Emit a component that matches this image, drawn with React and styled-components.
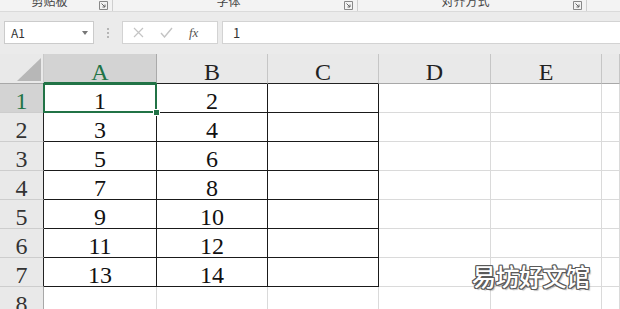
import React from "react";
import styled, { createGlobalStyle } from "styled-components";

const Global = createGlobalStyle`
  html, body { margin: 0; padding: 0; background: #fff; }
  body { overflow: hidden; }
`;

const Page = styled.div`
  width: 620px;
  height: 309px;
  overflow: hidden;
  position: relative;
  background: #fff;
  font-family: "Noto Sans CJK SC", "Noto Sans", sans-serif;
`;

const Ribbon = styled.div`
  display: flex;
  height: 11px;
  background: #f3f3f3;
  border-bottom: 1px solid #dadada;
  overflow: hidden;
`;

const RibbonGroup = styled.div`
  width: ${(p) => p.$w}px;
  flex: ${(p) => (p.$w ? "none" : "1")};
  display: flex;
  align-items: flex-end;
  height: 100%;
  border-right: ${(p) => (p.$w ? "1px solid #cfcfcf" : "none")};
  box-sizing: border-box;
  padding-right: 4px;
`;

const RibbonLabel = styled.span`
  flex: 1;
  text-align: center;
  font-size: 12px;
  line-height: 12px;
  margin-bottom: 4px;
  color: #444;
  white-space: nowrap;
`;

const Launcher = styled.svg`
  width: 9px;
  height: 9px;
  margin-bottom: 1px;
  flex: none;
`;

const FormulaBar = styled.div`
  display: flex;
  align-items: center;
  height: 42px;
  box-sizing: border-box;
  padding: 9px 0 10px 4px;
  background: #ebebeb;
`;

const NameBox = styled.div`
  width: 90px;
  height: 23px;
  box-sizing: border-box;
  background: #fff;
  border: 1px solid #cbcbcb;
  display: flex;
  align-items: center;
  justify-content: space-between;
  padding: 0 5px 0 6px;
  font-family: "Noto Sans CJK SC", "Noto Sans", sans-serif;
  font-size: 12px;
  color: #333;
`;

const Caret = styled.span`
  width: 0;
  height: 0;
  border-left: 3.5px solid transparent;
  border-right: 3.5px solid transparent;
  border-top: 4px solid #777;
`;

const Dots = styled.div`
  width: 28px;
  display: flex;
  flex-direction: column;
  align-items: center;
  gap: 2px;
  & > i {
    width: 2px;
    height: 2px;
    background: #b5b5b5;
    display: block;
  }
`;

const FuncBox = styled.div`
  width: 96px;
  height: 23px;
  box-sizing: border-box;
  background: #fff;
  border: 1px solid #d3d3d3;
  display: flex;
  align-items: center;
  padding-left: 10px;
  gap: 16px;
`;

const Fx = styled.span`
  font-family: "Liberation Serif", serif;
  font-style: italic;
  font-size: 13px;
  color: #555;
  margin-left: 0px;
`;

const FormulaInput = styled.div`
  flex: 1;
  margin-left: 4px;
  height: 23px;
  box-sizing: border-box;
  background: #fff;
  border: 1px solid #d3d3d3;
  border-right: none;
  display: flex;
  align-items: center;
  padding-left: 10px;
  font-size: 13px;
  color: #333;
`;

const Sheet = styled.div`
  display: grid;
  grid-template-columns: 44px 113px 111px 111px 112px 111px 1fr;
  grid-template-rows: 30px;
  grid-auto-rows: 29px;
  font-family: "Liberation Serif", "Noto Serif CJK SC", serif;
`;

const Corner = styled.div`
  background: #e9e9e9;
  border-right: 1px solid #c9c9c9;
  border-bottom: 1px solid #a8a8a8;
  box-sizing: border-box;
  position: relative;
  & > svg { display: block; }
`;

const ColHead = styled.div`
  box-sizing: border-box;
  background: ${(p) => (p.$sel ? "#d3d3d3" : "#e9e9e9")};
  color: ${(p) => (p.$sel ? "#217346" : "#222")};
  border-right: 1px solid ${(p) => (p.$sel ? "#aaaaaa" : "#c6c6c6")};
  border-bottom: ${(p) =>
    p.$sel ? "2px solid #217346" : p.$table ? "1px solid #222" : "1px solid #a8a8a8"};
  text-align: center;
  font-size: 24px;
  line-height: 22px;
  padding-top: 7px;
`;

const RowHead = styled.div`
  box-sizing: border-box;
  background: ${(p) => (p.$sel ? "#d3d3d3" : "#e9e9e9")};
  color: ${(p) => (p.$sel ? "#217346" : "#333")};
  border-right: 1px solid ${(p) => (p.$table ? "#222" : "#a8a8a8")};
  border-bottom: 1px solid #cdcdcd;
  text-align: center;
  font-size: 24px;
  line-height: 22px;
  padding-top: 6px;
`;

const Cell = styled.div`
  box-sizing: border-box;
  position: relative;
  border-right: 1px solid ${(p) => (p.$table ? "#1a1a1a" : "#dadada")};
  border-bottom: 1px solid ${(p) => (p.$table ? "#1a1a1a" : "#dadada")};
  text-align: center;
  font-size: 24px;
  line-height: 22px;
  padding-top: 6px;
  color: #111;
  ${(p) =>
    p.$active &&
    `
    &::after {
      content: "";
      position: absolute;
      left: -1px; top: -1px; right: -1px; bottom: -1px;
      border: 2px solid #217346;
      pointer-events: none;
    }
    &::before {
      content: "";
      position: absolute;
      right: -4px; bottom: -4px;
      width: 5px; height: 5px;
      background: #217346;
      border: 1px solid #fff;
      z-index: 2;
    }
  `}
`;

const Watermark = styled.div`
  position: absolute;
  left: 472px;
  top: 258px;
  font-family: "Noto Sans CJK SC", sans-serif;
  font-weight: 500;
  font-size: 24px;
  letter-spacing: -0.5px;
  color: #fff;
  text-shadow:
    1px 0 0 #5a5a5a, -1px 0 0 #5a5a5a, 0 1px 0 #5a5a5a, 0 -1px 0 #5a5a5a,
    1px 1px 0 #5a5a5a, -1px -1px 0 #5a5a5a, 1px -1px 0 #5a5a5a, -1px 1px 0 #5a5a5a,
    2px 2px 1px rgba(0,0,0,0.25);
`;

const LaunchIcon = () => (
  <Launcher viewBox="0 0 9 9">
    <path d="M0.5 0.5 H8.5 V8.5 H0.5 Z" fill="none" stroke="#888" strokeWidth="1" />
    <path d="M2.5 2.5 L6 6 M6 3.5 V6 H3.5" fill="none" stroke="#666" strokeWidth="1" />
  </Launcher>
);

const cols = ["A", "B", "C", "D", "E", ""];
const data = [
  [1, 2],
  [3, 4],
  [5, 6],
  [7, 8],
  [9, 10],
  [11, 12],
  [13, 14],
  [null, null],
];

export default function App() {
  return (
    <Page>
      <Global />
      <Ribbon>
        <RibbonGroup $w={113}>
          <RibbonLabel>剪贴板</RibbonLabel>
          <LaunchIcon />
        </RibbonGroup>
        <RibbonGroup $w={245}>
          <RibbonLabel>字体</RibbonLabel>
          <LaunchIcon />
        </RibbonGroup>
        <RibbonGroup $w={229}>
          <RibbonLabel>对齐方式</RibbonLabel>
          <LaunchIcon />
        </RibbonGroup>
        <RibbonGroup />
      </Ribbon>
      <FormulaBar>
        <NameBox>
          <span>A1</span>
          <Caret />
        </NameBox>
        <Dots>
          <i />
          <i />
          <i />
        </Dots>
        <FuncBox>
          <svg width="11" height="11" viewBox="0 0 11 11">
            <path d="M1 1 L10 10 M10 1 L1 10" stroke="#c4c4c4" strokeWidth="1.2" />
          </svg>
          <svg width="13" height="11" viewBox="0 0 13 11">
            <path d="M1 6 L4.5 10 L12 1" fill="none" stroke="#c4c4c4" strokeWidth="1.4" />
          </svg>
          <Fx>fx</Fx>
        </FuncBox>
        <FormulaInput>1</FormulaInput>
      </FormulaBar>
      <Sheet>
        <Corner>
          <svg width="43" height="29" viewBox="0 0 43 29">
            <polygon points="17,27 41,27 41,4" fill="#b7b7b7" />
          </svg>
        </Corner>
        {cols.map((c, i) => (
          <ColHead key={i} $sel={i === 0} $table={i < 3}>
            {c}
          </ColHead>
        ))}
        {data.map((row, r) => (
          <React.Fragment key={r}>
            <RowHead $sel={r === 0} $table={r < 7}>
              {r + 1}
            </RowHead>
            {cols.map((c, ci) => (
              <Cell
                key={ci}
                $table={r < 7 && ci < 3}
                $active={r === 0 && ci === 0}
              >
                {ci < 2 && row[ci] != null ? row[ci] : ""}
              </Cell>
            ))}
          </React.Fragment>
        ))}
      </Sheet>
      <Watermark>易坊好文馆</Watermark>
    </Page>
  );
}
